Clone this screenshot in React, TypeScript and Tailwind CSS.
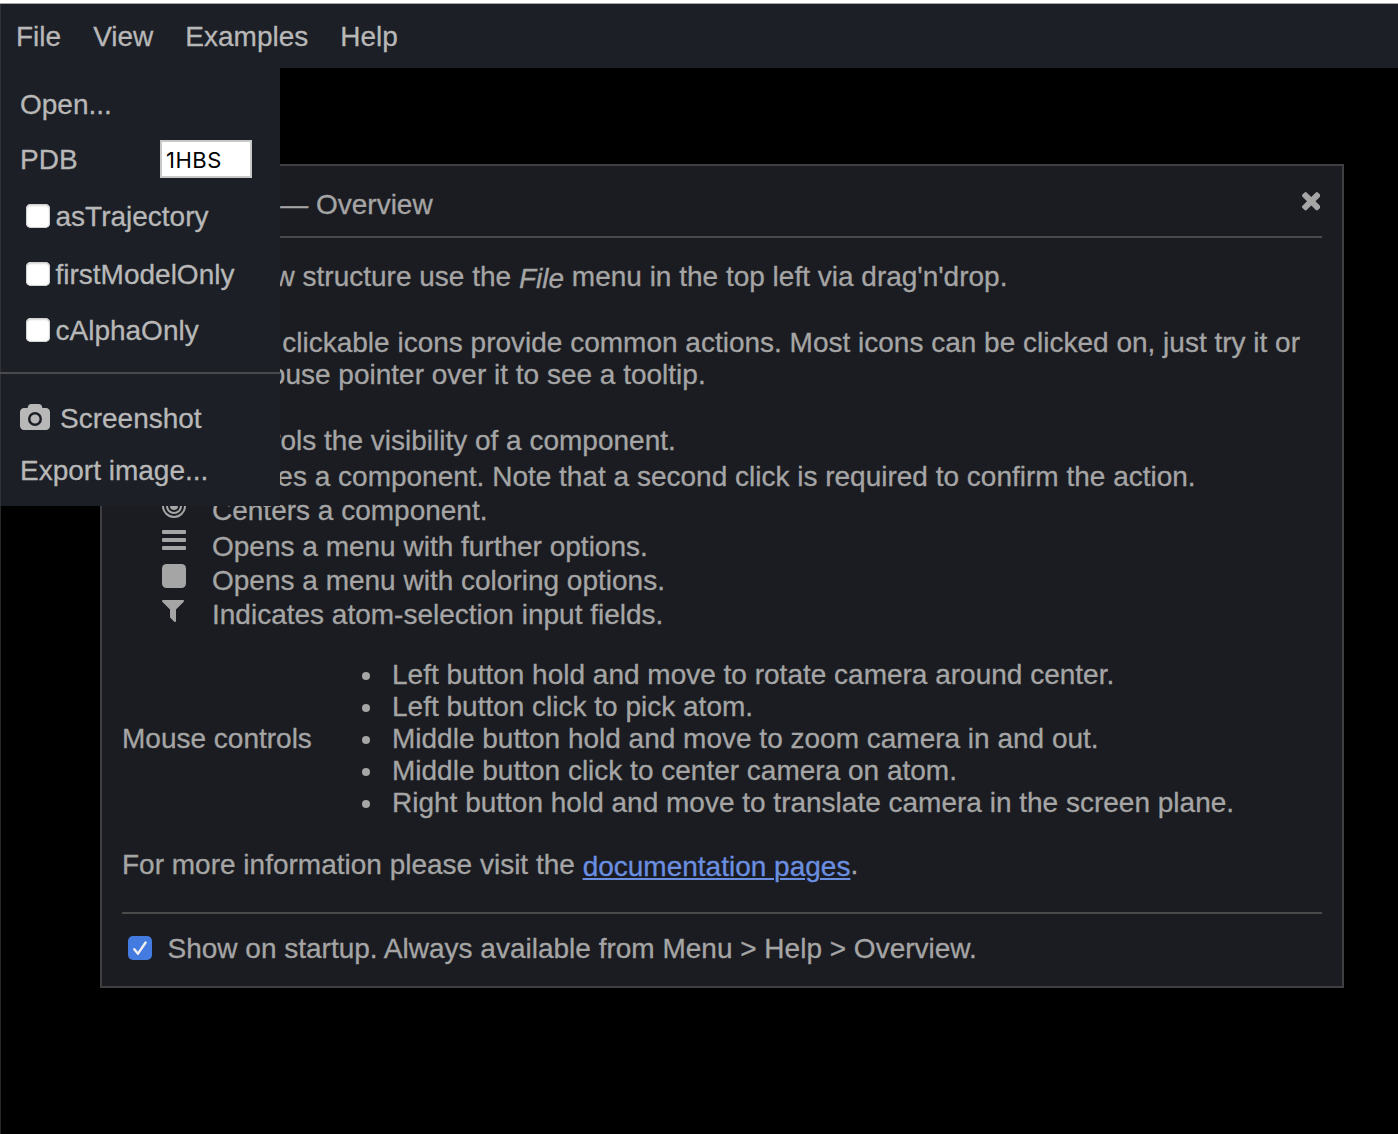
import React from "react";
import { FaEye, FaTrash } from "react-icons/fa";

const CAMERA =
  "M960 672q119 0 203.5 84.5t84.5 203.5-84.5 203.5-203.5 84.5-203.5-84.5-84.5-203.5 84.5-203.5 203.5-84.5zm704-416q106 0 181 75t75 181v896q0 106-75 181t-181 75h-1408q-106 0-181-75t-75-181v-896q0-106 75-181t181-75h224l51-136q19-49 69.5-84.5t103.5-35.5h512q53 0 103.5 35.5t69.5 84.5l51 136h224zm-704 1152q185 0 316.5-131.5t131.5-316.5-131.5-316.5-316.5-131.5-316.5 131.5-131.5 316.5 131.5 316.5 316.5 131.5z";
const TIMES =
  "M1490 1322q0 40-28 68l-136 136q-28 28-68 28t-68-28l-294-294-294 294q-28 28-68 28t-68-28l-136-136q-28-28-28-68t28-68l294-294-294-294q-28-28-28-68t28-68l136-136q28-28 68-28t68 28l294 294 294-294q28-28 68-28t68 28l136 136q28 28 28 68t-28 68l-294 294 294 294q28 28 28 68z";
const FILTER =
  "M1595 295q17 41-14 70l-493 493v742q0 42-39 59-13 5-25 5-27 0-45-19l-256-256q-19-19-19-45v-486l-493-493q-31-29-14-70 17-39 59-39h1280q42 0 59 39z";

const Bullseye = () => (
  <svg className="block size-6" viewBox="0 0 24 24" fill="none" stroke="currentColor" strokeWidth="2">
    <circle cx="12" cy="12" r="11" />
    <circle cx="12" cy="12" r="7" />
    <circle cx="12" cy="12" r="4" fill="currentColor" stroke="none" />
  </svg>
);

const Bars = () => (
  <svg className="block h-5 w-6" viewBox="0 0 24 20" fill="currentColor">
    <rect width="24" height="4" rx="1" />
    <rect y="8" width="24" height="4" rx="1" />
    <rect y="16" width="24" height="4" rx="1" />
  </svg>
);

const Filter = () => (
  <svg className="block h-[22px] w-[22px]" viewBox="192 256 1408 1408" fill="currentColor">
    <path d={FILTER} />
  </svg>
);

const actions = [
  { h: "h-9", icon: <FaEye size={26} />, text: "Controls the visibility of a component." },
  { h: "h-[34px]", icon: <FaTrash size={22} />, text: "Deletes a component. Note that a second click is required to confirm the action." },
  { h: "h-9", icon: <Bullseye />, text: "Centers a component." },
  { h: "h-[34px]", icon: <Bars />, text: "Opens a menu with further options." },
  { h: "h-[34px]", icon: <div className="size-6 rounded-[4.5px] bg-current" />, text: "Opens a menu with coloring options." },
  { h: "h-8", icon: <div className="pt-0.5"><Filter /></div>, text: "Indicates atom-selection input fields." },
];

const mouseControls = [
  "Left button hold and move to rotate camera around center.",
  "Left button click to pick atom.",
  "Middle button hold and move to zoom camera in and out.",
  "Middle button click to center camera on atom.",
  "Right button hold and move to translate camera in the screen plane.",
];

function Option({ label, className }: { label: string; className: string }) {
  return (
    <label className={`flex h-8 items-start pl-[26px] ${className}`}>
      <span className="mt-1 mr-[5.5px] size-6 shrink-0 rounded-[5px] bg-white shadow-[inset_0_0_1px_1px_#cfcfcf,inset_0_2px_2px_#dedede]" />
      <span className="mt-px">{label}</span>
    </label>
  );
}

function FileMenu() {
  return (
    <div className="absolute top-[68px] left-0 h-[438px] w-[280px] border-l border-[#303238] bg-[#1c1f26] pt-[21px]">
      <div className="-ml-px">
        <div className="pl-5">Open...</div>
        <div className="mt-[19px] flex h-[38px] pl-5">
          <span className="mt-1 w-[140px]">PDB</span>
          <div className="h-[38px] w-[92px] border-2 border-[#c8c8c8] bg-white pl-1 font-[Inter,sans-serif] text-[22px] leading-[36px] tracking-[0.5px] text-black [-webkit-text-stroke:0]">
            1HBS
          </div>
        </div>
        <Option label="asTrajectory" className="mt-[22px]" />
        <Option label="firstModelOnly" className="mt-[26px]" />
        <Option label="cAlphaOnly" className="mt-6" />
        <div className="mt-[26px] h-0.5 w-[280px] bg-[#4a4a4c]" />
        <div className="mt-7 flex pl-5">
          <svg className="mt-0.5 mr-2.5 block h-[26px] w-[30px]" viewBox="0 0 1920 1664" fill="currentColor">
            <path d={CAMERA} />
          </svg>
          <span className="mt-px">Screenshot</span>
        </div>
        <div className="mt-5 pl-5">Export image...</div>
      </div>
    </div>
  );
}

export default function App() {
  return (
    <div className="relative h-[1134px] w-[1398px] overflow-hidden bg-black font-['Liberation_Sans',Arial,sans-serif] text-[28px] leading-8 whitespace-nowrap text-[#b8b8b8] [-webkit-text-stroke:0.3px]">
      <div className="h-full border-l border-[#26282c]">
        <div className="-ml-px">
          <div className="h-1 border-b border-[#a8a8a8] bg-white" />
          <nav className="flex h-16 gap-8 border-l border-[#303238] bg-[#1c1f26] pt-[17px] pl-[15px]">
            <span>File</span>
            <span>View</span>
            <span>Examples</span>
            <span>Help</span>
          </nav>

          <section className="mt-24 ml-[100px] h-[824px] w-[1244px] border-2 border-[#3f3f41] bg-[#1b1c21] px-5 pt-[23px] text-[#a5a5a5]">
            <header className="flex h-[49px] justify-between border-b-2 border-[#4a4a4a]">
              <span className="pl-px">NGL Viewer — Overview</span>
              <svg className="mt-[3px] mr-0.5 block size-[18.5px]" viewBox="302 366 1188 1188" fill="currentColor">
                <path d={TIMES} />
              </svg>
            </header>
            <p className="mt-[23px] h-8">
              To load a new structure use the <i className="relative top-0.5">File</i> menu in the top left via drag'n'drop.
            </p>
            <p className="mt-[34px] h-16">
              <span className="ml-[1.5px]">A number of clickable icons provide common actions. Most icons can be clicked on, just try it or</span>
              <br />
              hover the mouse pointer over it to see a tooltip.
            </p>
            <div className="mt-[33px] pl-10">
              {actions.map((a) => (
                <div key={a.text} className={`flex ${a.h}`}>
                  <div className="w-[50px]">{a.icon}</div>
                  <span className="mt-px">{a.text}</span>
                </div>
              ))}
            </div>
            <div className="mt-[29px] flex h-40 items-center">
              <span className="w-[238px]">Mouse controls</span>
              <ul>
                {mouseControls.map((t) => (
                  <li key={t} className="flex">
                    <span className="mt-[13px] mr-[22px] ml-0.5 size-2 rounded-full bg-current" />
                    {t}
                  </li>
                ))}
              </ul>
            </div>
            <p className="mt-[30px] h-8">
              For more information please visit the{" "}
              <a className="relative top-0.5 text-[#6b8fe0] underline decoration-2 underline-offset-2">documentation pages</a>.
            </p>
            <div className="mt-[31px] h-0.5 bg-[#4a4a4a]" />
            <label className="mt-[18px] flex pl-1.5">
              <span className="mt-1 mr-[15.5px] size-6 rounded-[5px] bg-[#447be0]">
                <svg className="block size-6" viewBox="0 0 24 24" fill="none" stroke="#f0f0f0" strokeWidth="2.4" strokeLinecap="round" strokeLinejoin="round">
                  <path d="M6.3 13.2 10 17.7 17.6 6.5" />
                </svg>
              </span>
              <span className="mt-px">
                Show on startup. <span>Always available from Menu &gt; Help &gt; Overview.</span>
              </span>
            </label>
          </section>
        </div>
      </div>
      <FileMenu />
    </div>
  );
}
